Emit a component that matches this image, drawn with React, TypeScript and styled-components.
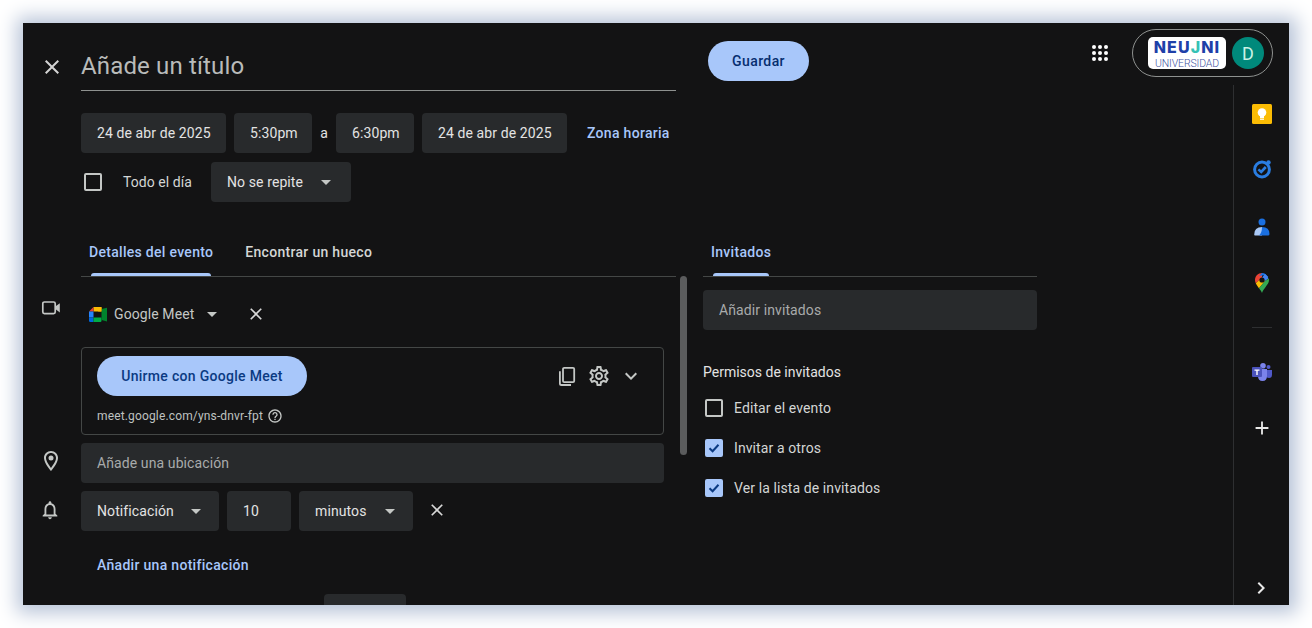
import React from 'react'
import styled, { createGlobalStyle } from 'styled-components'
import {
  MdClose,
  MdAdd,
  MdChevronRight,
  MdExpandMore,
  MdHelpOutline,
  MdOutlineLocationOn,
  MdOutlineNotifications,
  MdOutlineSettings,
} from 'react-icons/md'

const GlobalStyle = createGlobalStyle`
  html, body {
    margin: 0;
    background: #fff;
    font-family: Roboto, "Noto Sans", sans-serif;
  }
  * { box-sizing: border-box; }
`

const Page = styled.div`
  width: 1312px;
  height: 628px;
  padding: 23px;
  overflow: hidden;
`

const Screen = styled.div`
  height: 582px;
  display: flex;
  flex-direction: column;
  background: #131314;
  color: #e3e3e3;
  font-size: 14px;
  box-shadow: 1px 1px 18px 7px #b8c4d8;
`

const TopBar = styled.div`
  height: 62px;
  flex: none;
  display: flex;
  align-items: flex-start;
  padding-left: 17px;
`

const CloseTop = styled.div`
  width: 24px;
  height: 24px;
  margin-top: 32px;
  margin-right: 17px;
  color: #d4d4d4;
  font-size: 24px;
  line-height: 0;
`

const TitleField = styled.div`
  width: 595px;
  height: 68px;
  flex: none;
  padding-top: 28px;
  border-bottom: 1px solid #8e918f;
  color: #b9bbba;
  font-size: 24px;
  line-height: 30px;
  letter-spacing: 0.15px;
`

const SaveButton = styled.div`
  width: 101px;
  height: 40px;
  margin: 18px 0 0 32px;
  border-radius: 20px;
  background: #a8c7fa;
  color: #062e6f;
  font-weight: 500;
  letter-spacing: 0.4px;
  display: flex;
  align-items: center;
  justify-content: center;
`

const AppsIcon = styled.svg`
  width: 18px;
  height: 18px;
  margin: 21px 0 0 282px;
  flex: none;
`

const AccountPill = styled.div`
  width: 141px;
  height: 48px;
  margin: 6px 0 0 23px;
  flex: none;
  border: 1px solid #8e918f;
  border-radius: 24px;
  display: flex;
  align-items: center;
  padding-left: 15px;
`

const LogoCard = styled.div`
  width: 78px;
  height: 32px;
  border-radius: 5px;
  background: #fff;
  display: flex;
  flex-direction: column;
  align-items: center;
  justify-content: center;
`

const LogoName = styled.div`
  font-family: Inter, sans-serif;
  font-size: 16px;
  line-height: normal;
  font-weight: 800;
  letter-spacing: 1.1px;
  color: #1e40a8;
  span { color: #35c2b5; }
`

const LogoSub = styled.div`
  font-size: 10.5px;
  line-height: normal;
  font-weight: 300;
  letter-spacing: -0.15px;
  color: #43549f;
`

const Avatar = styled.div`
  width: 32px;
  height: 32px;
  margin-left: 6px;
  border-radius: 50%;
  background: #00897b;
  color: #c9f2e6;
  font-size: 18px;
  display: flex;
  align-items: center;
  justify-content: center;
`

const Body = styled.div`
  flex: 1;
  min-height: 0;
  display: flex;
`

const Editor = styled.div`
  flex: 1;
  min-width: 0;
  overflow: hidden;
  padding-top: 28px;
`

const FieldRow = styled.div<{ $tight?: boolean }>`
  display: flex;
  align-items: center;
  gap: ${({ $tight }) => ($tight ? 0 : 8)}px;
  margin-left: 58px;
  padding-left: ${({ $tight }) => ($tight ? 3 : 0)}px;
  height: 40px;
  margin-bottom: 9px;
`

const Chip = styled.div<{ $w: number; $muted?: boolean }>`
  width: ${({ $w }) => $w}px;
  height: 40px;
  flex: none;
  padding-left: 16px;
  border-radius: 4px;
  background: #282a2c;
  color: ${({ $muted }) => ($muted ? '#a9abab' : '#e3e3e3')};
  display: flex;
  align-items: center;
  white-space: nowrap;
  overflow: hidden;
  position: relative;
  letter-spacing: 0.1px;
`

const Caret = styled.i<{ $right: number }>`
  position: absolute;
  top: 18px;
  right: ${({ $right }) => $right}px;
  width: 0;
  height: 0;
  border-left: 5px solid transparent;
  border-right: 5px solid transparent;
  border-top: 5px solid #c4c7c5;
`

const Sep = styled.span`
  width: 8px;
  text-align: center;
  letter-spacing: 0.1px;
`

const BlueLink = styled.span<{ $left?: number }>`
  margin-left: ${({ $left }) => $left ?? 0}px;
  color: #a8c7fa;
  font-weight: 500;
  letter-spacing: 0.3px;
`

const Check = styled.div<{ $on?: boolean }>`
  width: 18px;
  height: 18px;
  flex: none;
  border-radius: 2px;
  border: 2px solid ${({ $on }) => ($on ? '#a8c7fa' : '#c4c7c5')};
  background: ${({ $on }) => ($on ? '#a8c7fa' : 'transparent')};
  display: flex;
  align-items: center;
  justify-content: center;
`

const AllDay = styled.span`
  color: #d4d6d5;
  margin: 0 20px 0 21px;
  width: 68px;
  white-space: nowrap;
  letter-spacing: 0.05px;
`

const Columns = styled.div`
  display: flex;
  margin-top: 30px;
`

const DetailsColumn = styled.div`
  width: 653px;
  flex: none;
  position: relative;
`

const ScrollThumb = styled.div`
  position: absolute;
  left: 657px;
  top: 44px;
  width: 7px;
  height: 179px;
  border-radius: 4px;
  background: #5b5c5d;
`

const TabBar = styled.div<{ $left: number }>`
  height: 45px;
  margin-left: ${({ $left }) => $left}px;
  border-bottom: 1px solid #444746;
  display: flex;
  gap: 32px;
  padding-left: 8px;
`

const Tab = styled.div<{ $active?: boolean }>`
  height: 44px;
  padding-top: 10px;
  position: relative;
  color: ${({ $active }) => ($active ? '#a8c7fa' : '#d4d6d5')};
  font-weight: 500;
  letter-spacing: 0.3px;
  line-height: 20px;
  white-space: nowrap;

  &::after {
    content: '';
    display: ${({ $active }) => ($active ? 'block' : 'none')};
    position: absolute;
    left: 2px;
    right: 2px;
    bottom: 0;
    height: 3px;
    border-radius: 3px 3px 0 0;
    background: #a8c7fa;
  }
`

const DetailRow = styled.div<{ $top: number }>`
  display: flex;
  align-items: center;
  height: 40px;
  margin-top: ${({ $top }) => $top}px;
`

const Gutter = styled.div<{ $shift?: number }>`
  width: 58px;
  flex: none;
  padding-left: 16px;
  color: #c4c7c5;
  font-size: 24px;
  line-height: 0;
  margin-top: ${({ $shift }) => $shift ?? 0}px;
  svg { display: block; }
`

const MeetPicker = styled.div`
  display: flex;
  align-items: center;
  padding-left: 8px;
  color: #c4c7c5;
  letter-spacing: 0.1px;
`

const MeetName = styled.span`
  margin: 0 13px 0 7px;
`

const InlineCaret = styled.i`
  width: 0;
  height: 0;
  border-left: 5px solid transparent;
  border-right: 5px solid transparent;
  border-top: 5px solid #c4c7c5;
`

const IconClose = styled.span<{ $left: number; $lift?: number }>`
  margin-left: ${({ $left }) => $left}px;
  margin-top: ${({ $lift }) => -($lift ?? 0)}px;
  color: #d8d8d8;
  font-size: 20px;
  line-height: 0;
`

const MeetCard = styled.div`
  width: 583px;
  height: 88px;
  margin: 13px 0 0 58px;
  padding: 8px 15px;
  border: 1px solid #444746;
  border-radius: 4px;
  display: grid;
  grid-template-columns: 1fr auto;
`

const JoinButton = styled.div`
  width: 210px;
  height: 40px;
  border-radius: 20px;
  background: #a8c7fa;
  color: #0b3a82;
  font-weight: 500;
  letter-spacing: 0.3px;
  display: flex;
  align-items: center;
  justify-content: center;
`

const CardTools = styled.div`
  display: flex;
  align-items: center;
  gap: 8px;
  height: 40px;
  color: #c4c7c5;
  margin-right: 5px;
  svg { display: block; }
`

const MeetLink = styled.div`
  grid-column: 1 / -1;
  display: flex;
  align-items: center;
  gap: 4px;
  margin-top: 8px;
  font-size: 12px;
  line-height: 20px;
  letter-spacing: 0.15px;
  color: #bfc2c0;
  svg { display: block; color: #c4c7c5; }
`

const NotifyRow = styled.div`
  display: flex;
  gap: 8px;
  align-items: center;
`

const AddNotify = styled.div`
  height: 40px;
  margin: 14px 0 0 74px;
  display: flex;
  align-items: center;
`

const ClippedChip = styled.div`
  width: 82px;
  height: 40px;
  margin: 9px 0 0 301px;
  border-radius: 4px;
  background: #282a2c;
`

const GuestsColumn = styled.div`
  width: 334px;
  margin-left: 27px;
  flex: none;
`

const GuestInput = styled(Chip)`
  margin-top: 13px;
`

const PermissionsTitle = styled.div`
  margin-top: 32px;
  line-height: 20px;
  margin-bottom: 6px;
`

const Permission = styled.div`
  height: 40px;
  display: flex;
  align-items: center;
  gap: 11px;
  padding-left: 2px;
  color: #d4d6d5;
  letter-spacing: 0.1px;
`

const Rail = styled.div`
  width: 56px;
  flex: none;
  border-left: 1px solid #2e2f31;
  display: flex;
  flex-direction: column;
  align-items: center;
  padding-top: 19px;
`

const RailSlot = styled.div<{ $h: number }>`
  height: ${({ $h }) => $h}px;
  flex: none;
  color: #e8e8e8;
  line-height: 0;
  svg { display: block; }
`

const RailDivider = styled.div`
  width: 20px;
  height: 1px;
  background: #2e2f31;
  margin-bottom: 35px;
`

const RailBottom = styled.div`
  margin-top: auto;
  margin-bottom: 5px;
  margin-right: 2px;
  color: #e8e8e8;
  line-height: 0;
`

const Tick = () => (
  <svg width="14" height="14" viewBox="0 0 14 14">
    <path d="M2.5 7.2 5.6 10.2 11.5 3.8" fill="none" stroke="#0b3a82" strokeWidth="2" />
  </svg>
)

const VideoIcon = () => (
  <svg width="24" height="24" viewBox="0 0 24 24">
    <rect x="3.8" y="6" width="12.4" height="11.6" rx="1.6" fill="none" stroke="currentColor" strokeWidth="1.7" />
    <path d="M17 10 20.8 7.2V16.6L17 13.6z" fill="currentColor" />
  </svg>
)

const MeetLogo = () => (
  <svg width="18" height="15" viewBox="0 0 18 15">
    <path d="M4.5 0H12.5V4.5H4.5z" fill="#fbbc04" />
    <path d="M4.5 0V4.5H0z" fill="#ea4335" />
    <path d="M0 4.5H4.5V10.5H0z" fill="#2684fc" />
    <path d="M0 10.5H4.5V15H1.2Q0 15 0 13.8z" fill="#0066da" />
    <path d="M4.5 10.5H12.5V13.8Q12.5 15 11.3 15H4.5z" fill="#00ac47" />
    <path d="M12.5 2V13L18 14.5V.8z" fill="#00832d" />
    <path d="M12.5 0 12.5 4.5H9z" fill="#ffba00" />
  </svg>
)

const CopyIcon = () => (
  <svg width="24" height="24" viewBox="0 0 24 24" fill="none" stroke="currentColor" strokeWidth="1.8">
    <rect x="8" y="3.9" width="11.2" height="14.2" rx="1.2" />
    <path d="M4.9 7.2V19.4Q4.9 21 6.5 21H16" />
  </svg>
)

const KeepIcon = () => (
  <svg width="20" height="20" viewBox="0 0 20 20">
    <rect width="20" height="20" rx="1.5" fill="#fbbc04" />
    <circle cx="10" cy="8.5" r="4.3" fill="#fff" />
    <rect x="8" y="11" width="4" height="3" fill="#fff" />
    <rect x="8" y="14.6" width="4" height="1.2" fill="#fff" />
  </svg>
)

const TasksIcon = () => (
  <svg width="20" height="20" viewBox="0 0 20 20" fill="none">
    <circle cx="10" cy="10.5" r="7.4" stroke="#2a7de1" strokeWidth="3" />
    <path d="M6.4 10.4 9.2 13 13.8 8" stroke="#2a7de1" strokeWidth="2.6" />
    <circle cx="16.5" cy="3.4" r="2.2" fill="#2a7de1" />
  </svg>
)

const ContactsIcon = () => (
  <svg width="16" height="18" viewBox="0 0 16 18">
    <circle cx="8" cy="4" r="3.5" fill="#1a6fe0" />
    <path d="M1 17.5Q.2 17.5.2 16.5 .2 9 8 9V17.5z" fill="#a9c8f5" />
    <path d="M8 9Q15.5 9 15.5 16 15.5 17.5 14 17.5H5Q8 15 8 9z" fill="#1a6fe0" />
  </svg>
)

const MapsIcon = () => (
  <svg width="14" height="20" viewBox="0 0 14 20">
    <path d="M7 0C3 0 0 3 0 7c0 1.2.3 2.2.8 3.2L7 4.5z" fill="#ea4335" />
    <path d="M.8 10.2C1.8 12.4 3 13.8 4 15.2L10 8 7 4.5z" fill="#fbbc04" />
    <path d="M7 0 4 3 10.5 2 13 4.5C12 2 9.8 0 7 0z" fill="#1a73e8" />
    <path d="M7 4.5 10 8 13.4 5.6C13.2 4.7 12.9 4 12.5 3.2L10 1z" fill="#4285f4" />
    <path d="M4 15.2C5.2 16.8 6.4 18 7 20c.8-2.6 2.2-4 3.6-6 1.6-2.4 3.4-4 3.4-7 0-.5 0-.9-.1-1.4L10 8z" fill="#34a853" />
    <circle cx="7" cy="7" r="2.6" fill="#131314" />
  </svg>
)

const TeamsIcon = () => (
  <svg width="20" height="18" viewBox="0 0 20 18">
    <circle cx="11" cy="2.8" r="2.8" fill="#7b83eb" />
    <circle cx="16.5" cy="4" r="2" fill="#5059c9" />
    <path d="M14 7H20V12Q20 15 17 15 14 15 14 12z" fill="#5059c9" />
    <path d="M6 6H15V13Q15 18 10.5 18 6 18 6 13z" fill="#7b83eb" />
    <rect y="4" width="10" height="10" rx="1" fill="#4b53bc" />
    <path d="M2.5 6.5H7.5V7.7H5.7V12H4.3V7.7H2.5z" fill="#fff" />
  </svg>
)

const apps = [3, 9, 15]

export default function App() {
  return (
    <Page>
      <GlobalStyle />
      <Screen>
        <TopBar>
          <CloseTop>
            <MdClose />
          </CloseTop>
          <TitleField>Añade un título</TitleField>
          <SaveButton>Guardar</SaveButton>
          <AppsIcon viewBox="0 0 18 18">
            {apps.map((y) =>
              apps.map((x) => <circle key={`${x}-${y}`} cx={x} cy={y} r="2" fill="#fff" />),
            )}
          </AppsIcon>
          <AccountPill>
            <LogoCard>
              <LogoName>
                NEU<span>J</span>NI
              </LogoName>
              <LogoSub>UNIVERSIDAD</LogoSub>
            </LogoCard>
            <Avatar>D</Avatar>
          </AccountPill>
        </TopBar>
        <Body>
          <Editor>
            <FieldRow>
              <Chip $w={145}>24 de abr de 2025</Chip>
              <Chip $w={78}>5:30pm</Chip>
              <Sep>a</Sep>
              <Chip $w={78}>6:30pm</Chip>
              <Chip $w={145}>24 de abr de 2025</Chip>
              <BlueLink $left={12}>Zona horaria</BlueLink>
            </FieldRow>
            <FieldRow $tight>
              <Check />
              <AllDay>Todo el día</AllDay>
              <Chip $w={140}>
                No se repite
                <Caret $right={20} />
              </Chip>
            </FieldRow>
            <Columns>
              <DetailsColumn>
                <ScrollThumb />
                <TabBar $left={58}>
                  <Tab $active>Detalles del evento</Tab>
                  <Tab>Encontrar un hueco</Tab>
                </TabBar>
                <DetailRow $top={17}>
                  <Gutter $shift={-12}>
                    <VideoIcon />
                  </Gutter>
                  <MeetPicker>
                    <MeetLogo />
                    <MeetName>Google Meet</MeetName>
                    <InlineCaret />
                  </MeetPicker>
                  <IconClose $left={29}>
                    <MdClose />
                  </IconClose>
                </DetailRow>
                <MeetCard>
                  <JoinButton>Unirme con Google Meet</JoinButton>
                  <CardTools>
                    <CopyIcon />
                    <MdOutlineSettings size={24} />
                    <MdExpandMore size={24} />
                  </CardTools>
                  <MeetLink>
                    meet.google.com/yns-dnvr-fpt
                    <MdHelpOutline size={16} />
                  </MeetLink>
                </MeetCard>
                <DetailRow $top={8}>
                  <Gutter $shift={-4}>
                    <MdOutlineLocationOn />
                  </Gutter>
                  <Chip $w={583} $muted>
                    Añade una ubicación
                  </Chip>
                </DetailRow>
                <DetailRow $top={8}>
                  <Gutter $shift={-2}>
                    <MdOutlineNotifications size={22} />
                  </Gutter>
                  <NotifyRow>
                    <Chip $w={138}>
                      Notificación
                      <Caret $right={18} />
                    </Chip>
                    <Chip $w={64}>10</Chip>
                    <Chip $w={114}>
                      minutos
                      <Caret $right={18} />
                    </Chip>
                    <IconClose $left={6} $lift={2}>
                      <MdClose />
                    </IconClose>
                  </NotifyRow>
                </DetailRow>
                <AddNotify>
                  <BlueLink>Añadir una notificación</BlueLink>
                </AddNotify>
                <ClippedChip />
              </DetailsColumn>
              <GuestsColumn>
                <TabBar $left={0}>
                  <Tab $active>Invitados</Tab>
                </TabBar>
                <GuestInput $w={334} $muted>
                  Añadir invitados
                </GuestInput>
                <PermissionsTitle>Permisos de invitados</PermissionsTitle>
                <Permission>
                  <Check />
                  Editar el evento
                </Permission>
                <Permission>
                  <Check $on>
                    <Tick />
                  </Check>
                  Invitar a otros
                </Permission>
                <Permission>
                  <Check $on>
                    <Tick />
                  </Check>
                  Ver la lista de invitados
                </Permission>
              </GuestsColumn>
            </Columns>
          </Editor>
          <Rail>
            <RailSlot $h={55}>
              <KeepIcon />
            </RailSlot>
            <RailSlot $h={59}>
              <TasksIcon />
            </RailSlot>
            <RailSlot $h={55}>
              <ContactsIcon />
            </RailSlot>
            <RailSlot $h={54}>
              <MapsIcon />
            </RailSlot>
            <RailDivider />
            <RailSlot $h={54}>
              <TeamsIcon />
            </RailSlot>
            <RailSlot $h={24}>
              <MdAdd size={22} />
            </RailSlot>
            <RailBottom>
              <MdChevronRight size={24} />
            </RailBottom>
          </Rail>
        </Body>
      </Screen>
    </Page>
  )
}
